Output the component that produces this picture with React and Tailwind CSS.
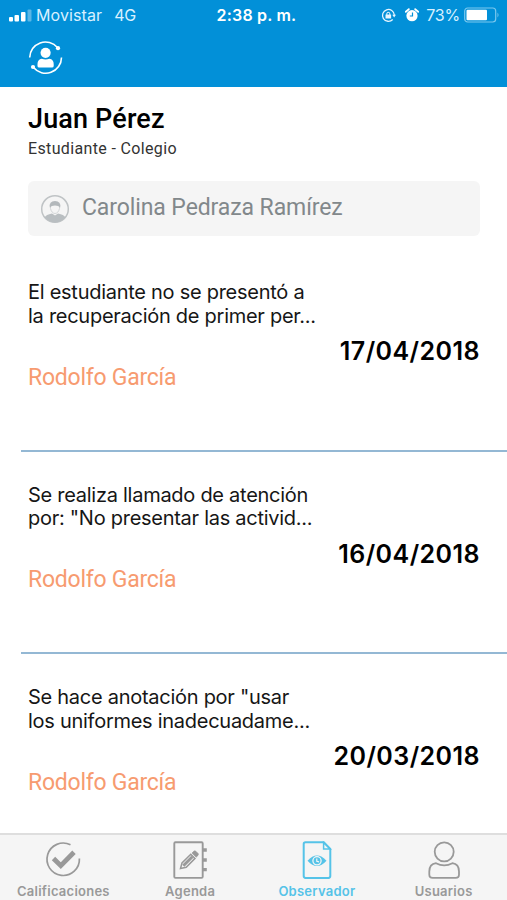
const annotations = [
  {
    id: 1,
    lines: ["El estudiante no se presentó a", "la recuperación de primer per..."],
    teacher: "Rodolfo García",
    date: "17/04/2018",
  },
  {
    id: 2,
    lines: ["Se realiza llamado de atención", 'por: "No presentar las activid...'],
    teacher: "Rodolfo García",
    date: "16/04/2018",
  },
  {
    id: 3,
    lines: ['Se hace anotación por "usar', "los uniformes inadecuadame..."],
    teacher: "Rodolfo García",
    date: "20/03/2018",
  },
];

const GradesIcon = () => (
  <svg className="h-10 w-10" viewBox="0 0 40 40" fill="none" stroke="currentColor">
    <path d="M27.5 4.8A16.2 16.2 0 1 0 36.4 18.5" strokeWidth="1.7" />
    <path d="M10.5 18.5L17.8 25.7L31 12.3" strokeWidth="4.8" />
  </svg>
);

const AgendaIcon = () => (
  <svg className="h-10 w-10" viewBox="0 0 40 40" fill="none" stroke="currentColor">
    <rect x="4.3" y="2.3" width="28.4" height="35.6" rx="1.2" strokeWidth="1.9" />
    <path d="M33 10h3.8M33 20h3.8M33 29.6h3.8" strokeWidth="3.4" />
    <path d="M10.5 28.5l1.5-5.5 8.8-8.8 4.2 4.2-8.8 8.8z" strokeWidth="1.5" />
    <path d="M13.3 25.8l9-9" strokeWidth="3" />
    <path d="M22 13l1.7-1.7a1.6 1.6 0 0 1 2.2 0l2 2a1.6 1.6 0 0 1 0 2.2l-1.7 1.7z" fill="currentColor" strokeWidth="0.6" />
  </svg>
);

const ObserverIcon = () => (
  <svg className="h-10 w-10" viewBox="0 0 40 40" fill="none" stroke="currentColor">
    <path d="M26.8 2.3H8.5a1.8 1.8 0 0 0-1.8 1.8v32a1.8 1.8 0 0 0 1.8 1.8h23a1.8 1.8 0 0 0 1.8-1.8V8.8z" strokeWidth="2" />
    <path d="M26.6 2.5v6.5h6.5z" strokeWidth="1.5" />
    <path d="M10.5 20.8q9.5-10.5 19 0q-9.5 10.5-19 0z" fill="currentColor" stroke="none" />
    <circle cx="20" cy="20.8" r="4.1" stroke="#f5f5f5" strokeWidth="1.3" />
    <path d="M19.8 18.4v2.8l2.2 0.7" stroke="#f5f5f5" strokeWidth="1.2" />
  </svg>
);

const UsersIcon = () => (
  <svg className="h-10 w-10" viewBox="0 0 40 40" fill="none" stroke="currentColor" strokeWidth="1.8">
    <circle cx="20.2" cy="11.8" r="9.5" />
    <path d="M12 23.2C7.5 23.8 5.3 27 5.3 31.5V34.5Q5.3 37.9 8.7 37.9H31.6Q35 37.9 35 34.5V31.5C35 27 32.8 23.8 28.4 23.2Q20.2 27.6 12 23.2Z" />
  </svg>
);

const tabs = [
  { label: "Calificaciones", icon: GradesIcon },
  { label: "Agenda", icon: AgendaIcon },
  { label: "Observador", icon: ObserverIcon, active: true },
  { label: "Usuarios", icon: UsersIcon },
];

const StatusBar = () => (
  <div className="grid h-[30px] grid-cols-[1fr_auto_1fr] items-center pr-[7px] pl-[9px] font-['Inter',sans-serif] text-[16px] text-[#d9f0ff]">
    <div className="flex items-center">
      <svg className="h-[13px] w-[24px]" viewBox="0 0 24 13" fill="#fff">
        <rect x="0" y="8" width="4" height="4.5" rx="1" />
        <rect x="5.5" y="6" width="4.5" height="6.5" rx="1" />
        <rect x="12" y="3" width="4.5" height="9.5" rx="1" />
        <rect x="18.5" y="0.5" width="4" height="12" rx="1" opacity="0.35" />
      </svg>
      <span className="ml-[3px] tracking-[0.1px]">Movistar</span>
      <span className="ml-[12px] tracking-[-0.3px]">4G</span>
    </div>
    <span className="pl-1 font-semibold tracking-[0.2px] text-white">2:38 p. m.</span>
    <div className="flex items-center justify-end">
      <svg className="mr-px h-[15px] w-[15px]" viewBox="0 0 16 16" fill="none" stroke="#e6f5ff" strokeWidth="1.4">
        <path d="M12.500 12.200A6.300 6.300 0 1 1 14.200 7.500" />
        <path d="M12 7.300h4l-2 2.800z" fill="#e6f5ff" stroke="none" />
        <rect x="4.800" y="7" width="6" height="4.200" fill="#e6f5ff" stroke="none" />
        <path d="M6.200 7.500V6.200a1.600 1.600 0 0 1 3.200 0v1.300" strokeWidth="1.100" />
      </svg>
      <svg className="ml-[8px] h-[14px] w-[14px]" viewBox="0 0 14 14">
        <circle cx="7" cy="7.7" r="5.6" fill="#fff" />
        <path d="M0.8 3.8L3.8 1.2M13.2 3.8L10.2 1.2" stroke="#fff" strokeWidth="1.8" strokeLinecap="round" />
        <path d="M7.5 4.4v3.6H4.8" fill="none" stroke="#0290d8" strokeWidth="1.2" />
      </svg>
      <span className="ml-[7px] tracking-[-0.2px]">73%</span>
      <svg className="ml-1 h-4 w-9" viewBox="0 0 36 16" fill="none">
        <rect x="0.7" y="1" width="31" height="14" rx="3" stroke="#7cc8ee" strokeWidth="1.2" />
        <rect x="2.5" y="2.8" width="20.5" height="10.4" rx="1" fill="#fff" />
        <path d="M33.5 5.5q2 2.500 0 5z" fill="#7cc8ee" />
      </svg>
    </div>
  </div>
);

const App = () => {
  return (
    <div className="flex h-[900px] w-[507px] flex-col overflow-hidden bg-white font-['Inter',sans-serif]">
      <header className="h-[87px] shrink-0 bg-[#0290d8]">
        <StatusBar />
        {/* Switch user */}
        <svg className="mt-[10px] ml-7 h-9 w-9" viewBox="0 0 36 36" fill="none" stroke="#fff">
          <path d="M1.7 17.5A15.8 15.8 0 0 1 29.5 7.500" strokeWidth="1.6" />
          <path d="M33.5 17.5A15.8 15.8 0 0 1 5.5 27.500" strokeWidth="1.6" />
          <circle cx="30" cy="8.2" r="2.1" fill="#fff" stroke="none" />
          <circle cx="5" cy="27" r="2.1" fill="#fff" stroke="none" />
          <circle cx="17.6" cy="12.8" r="5.1" fill="#fff" stroke="none" />
          <path d="M11.2 27.6q-1.700 0-1.700-1.700v-1.900q0-4.500 4.300-5.200q3.800 1.600 7.600 0q4.300.7 4.300 5.200v1.900q0 1.700-1.700 1.700z" fill="#fff" stroke="none" />
        </svg>
      </header>

      <main className="flex min-h-0 flex-1 flex-col overflow-hidden">
        <div className="px-7 pt-4">
          <h1 className="font-['Roboto',sans-serif] text-[27px] leading-[32px] font-medium tracking-[0.15px] text-black">
            Juan Pérez
          </h1>
          <p className="mt-1 font-['Roboto',sans-serif] text-[16px] leading-5 tracking-[0.35px] text-[#333]">
            Estudiante - Colegio
          </p>
          <div className="mt-[22px] -mr-px flex h-[55px] items-center rounded-md bg-[#f5f5f5] pl-3">
            <svg className="h-[30px] w-[30px]" viewBox="0 0 30 30" fill="none">
              <circle cx="15" cy="15" r="13.3" stroke="#bfc3c5" strokeWidth="1.5" />
              <path d="M4.500 23.500q1.500-3 7.500-4l3 2 3-2q6 1 7.500 4q-10.500 10-21 0z" fill="#b9bec1" />
              <path d="M10.5 11v3.500q1.200 4.800 4.500 5q3.300-.2 4.500-5V11" fill="#f5f5f5" stroke="#d2d5d7" />
              <path d="M9.800 13.500q-1-6.500 5.200-6.500t5.200 6.500q-1.700-2-5.200-2t-5.200 2z" fill="#b3b8bb" />
            </svg>
            <span className="ml-3 font-['Roboto',sans-serif] text-[23px] tracking-[-0.1px] text-[#82888b]">
              Carolina Pedraza Ramírez
            </span>
          </div>
        </div>

        <ul className="mt-[13px] pl-[21px]">
          {annotations.map((item) => (
            <li
              key={item.id}
              className="h-[202.5px] border-b-2 border-[#94b8d4] pt-8 pr-[27px] pl-[7px]"
            >
              <p className="text-[20px] leading-[23.5px] tracking-[-0.27px] text-[#161616]">
                {item.lines.map((line) => (
                  <span key={line} className="block whitespace-nowrap">
                    {line}
                  </span>
                ))}
              </p>
              <p className="mt-[7px] text-right text-[25px] leading-8 font-semibold tracking-[0.45px] text-black">
                {item.date}
              </p>
              <p className="-mt-[3.5px] font-['Roboto',sans-serif] text-[23px] leading-7 tracking-[-0.25px] text-[#f79b70]">
                {item.teacher}
              </p>
            </li>
          ))}
        </ul>
      </main>

      <nav className="grid h-[67px] shrink-0 grid-cols-4 border-t-2 border-[#dedede] bg-[#f5f5f5]">
        {tabs.map(({ label, icon: Icon, active }) => (
          <div
            key={label}
            className={`flex flex-col items-center pt-[5px] ${active ? "text-[#55c3e8]" : "text-[#999]"}`}
          >
            <Icon />
            <span className="mt-[3px] text-[13px] leading-4 font-semibold tracking-[0.25px]">{label}</span>
          </div>
        ))}
      </nav>
    </div>
  );
};

export default App;
